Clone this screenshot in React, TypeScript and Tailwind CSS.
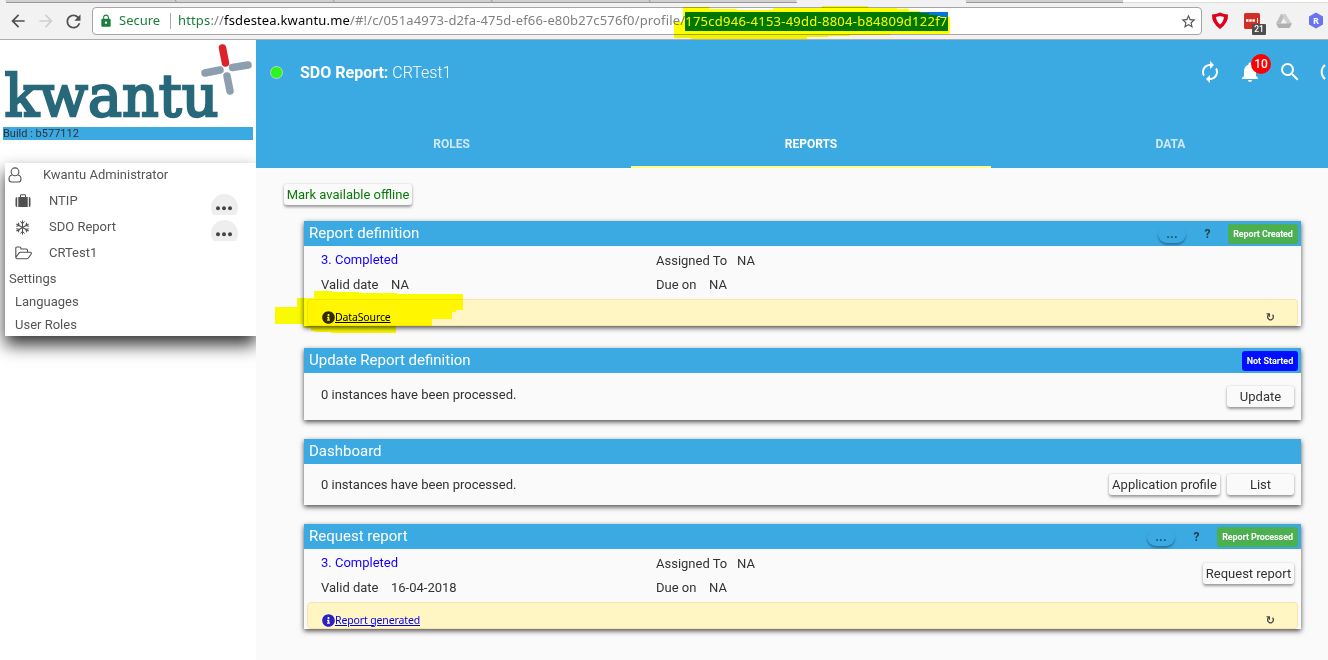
import React from "react";
import { MdAutorenew, MdNotifications, MdSearch, MdStarBorder, MdArrowBack, MdArrowForward, MdRefresh, MdLock } from "react-icons/md";
import { FaInfoCircle } from "react-icons/fa";

function TabStrip() {
  return (
    <svg className="block h-[3px] w-full shrink-0" viewBox="0 0 1328 3">
      <rect width="1328" height="3" fill="#f2f2f2" />
      <path d="M5 0H797L795.500 2.500H6.500Z" fill="#d0d0d0" />
      <path d="M965 0H1123V2.500H967Z" fill="#d0d0d0" />
      <path d="M6 2.500H797M966 2.500H1123M175 0l1.500 2M333 0l1.500 2M491 0l1.500 2M649 0l1.500 2" stroke="#999" fill="none" />
      <path d="M1123 0H1328V2H1124Z" fill="#fff" />
      <path d="M1123 2.500H1328" stroke="#ddd" />
    </svg>
  );
}

function BrowserBar() {
  return (
    <div className="relative flex h-10 flex-col border-b border-[#adadad] bg-[#f2f2f2] font-['Noto_Sans','Open_Sans',sans-serif]">
      <TabStrip />
      <div className="flex h-9 items-center">
        <div className="flex w-[92px] shrink-0 items-center pl-2 text-[#505050]">
          <MdArrowBack size={20} />
          <MdArrowForward size={20} className="ml-2 text-[#cfcfcf]" />
          <MdRefresh size={21} className="ml-[7px]" />
        </div>
        <div className="flex h-7 w-[1110px] shrink-0 items-center rounded-sm border border-[#a6a6a6] bg-white pr-[4px] text-[13px] whitespace-nowrap">
          <MdLock size={14} className="ml-1.5 text-[#188038]" />
          <span className="ml-[6px] w-[43px] text-[#188038]">Secure</span>
          <span className="ml-[8px] h-4 w-px bg-[#aaa]" />
          <span className="ml-[7px] tracking-[0.15px] text-[#808080]">
            <span className="text-[#188038]">https</span>://<span className="text-black">fsdestea.kwantu.me</span>/#!/c/051a4973-d2fa-475d-ef66-e80b27c576f0/profile/
          </span>
          <span className="h-[19px] w-[263px] bg-[#0078d7] leading-[19px] tracking-[0.25px] text-white">175cd946-4153-49dd-8804-b84809d122f7</span>
          <MdStarBorder size={17} className="ml-auto text-[#555]" />
        </div>
        <svg className="ml-[9px] h-5 w-[117px] shrink-0" viewBox="0 0 117 20">
          <path d="M1 3.500Q5 3.500 9 1.500Q13 3.500 17 3.500Q17.500 12 9 18Q0.500 12 1 3.500Z" fill="#e2001a" />
          <path d="M5 6Q9 4.500 13 6Q12.500 10.500 9 13.500Q5.500 10.500 5 6Z" fill="#fff" />
          <rect x="33" y="2" width="16" height="16" rx="1.500" fill="#d32d27" />
          <path d="M35 9.500h9" stroke="#fff" strokeWidth="2.500" strokeDasharray="2.500 .7" />
          <path d="M46.500 7v5" stroke="#fff" />
          <path d="M70 3h5l-5.500 9.500h-4.500Z" fill="#bdbdbd" />
          <path d="M70.500 3h4l6.500 10h-5Z" fill="#cfcfcf" />
          <path d="M65 12.500h16l-2.500 4.500h-11Z" fill="#b0b0b0" />
          <path d="M105 1.500l7 4v8l-7 4-7-4v-8Z" fill="#6b74ef" />
          <text x="105" y="13" textAnchor="middle" fontSize="9" fontWeight="700" fill="#fff">R</text>
        </svg>
      </div>
      <span className="absolute top-6 left-[1252px] flex h-[11px] w-[14px] items-center justify-center rounded-[1px] bg-[#4d4d4d] font-['Roboto',sans-serif] text-[8.500px] font-medium text-white">21</span>
      <svg className="pointer-events-none absolute top-0 left-[670px] z-20 h-[42px] w-[290px] mix-blend-multiply" viewBox="0 0 290 42">
        <path d="M13 7H39V9H67V10H103V8H152V6H198V8H227V9H239V11H250V13H259V15H268V17H280V34H220V35H180V36H158V37H137V39H21V38H4V22H13Z" fill="#ff0" />
      </svg>
    </div>
  );
}

function Logo() {
  return (
    <svg className="block h-[87px] w-64" viewBox="0 0 256 87">
      <text x="4.500" y="75.800" fontFamily="DejaVu Serif" fontSize="58" fill="#27687a" stroke="#27687a" strokeWidth="2.400" textLength="214" lengthAdjust="spacingAndGlyphs">kwantu</text>
      <g strokeWidth="7.500" strokeLinecap="round" fill="none">
        <path d="M222.500 8L225.500 23" stroke="#de2229" />
        <path d="M205 33L220 30M232.500 27.500L248 25M227 36L230 51" stroke="#8d9fae" />
      </g>
    </svg>
  );
}

function UserIcon() {
  return (
    <svg width="14" height="16" viewBox="0 0 14 16" fill="none" stroke="#555" strokeWidth="1.100">
      <circle cx="7" cy="4.800" r="3.900" />
      <path d="M4 8Q1 8.500 1 12Q1 15 3.500 15H10.500Q13 15 13 12Q13 8.500 10 8" />
    </svg>
  );
}

function SuitcaseIcon() {
  return (
    <svg width="16" height="16" viewBox="0 0 16 16" fill="#505050">
      <path d="M2.200 4V14Q0.500 14 0.500 12.500V5.500Q0.500 4 2.200 4ZM13.800 4V14Q15.500 14 15.500 12.500V5.500Q15.500 4 13.800 4Z" />
      <path fillRule="evenodd" d="M3.300 4H5V2.500Q5 1.200 6.200 1.200H9.800Q11 1.200 11 2.500V4H12.700V14H3.300ZM6 4H10V2.200H6Z" />
    </svg>
  );
}

function SnowflakeIcon() {
  return (
    <svg width="15" height="15" viewBox="0 0 15 15" fill="none" stroke="#505050" strokeWidth="1">
      {[0, 60, 120, 180, 240, 300].map((angle) => (
        <path key={angle} transform={`rotate(${angle} 7.5 7.5)`} d="M7.500 7.500V0.400M5.500 1.400L7.500 3.800L9.500 1.400" />
      ))}
    </svg>
  );
}

function FolderIcon() {
  return (
    <svg width="17" height="14" viewBox="0 0 17 14" fill="none" stroke="#505050" strokeWidth="1.100" strokeLinejoin="round">
      <path d="M0.800 11.500V2.200Q0.800 1 2 1H4.700Q5.900 1 5.900 2.200V3H11.300Q12.500 3 12.500 4.200V6M0.800 11.500Q1 12.700 2.200 12.700H12Q12.900 12.600 13.400 12L16 8.200Q17 6.500 15.300 6.300H5.500Q4.500 6.400 3.900 7.200Z" />
    </svg>
  );
}

function Dots() {
  return (
    <span className="mt-[7px] mr-[18px] ml-auto h-[21px] w-[27px] shrink-0 self-start overflow-hidden">
      <svg width="27" height="27" viewBox="0 0 27 27">
        <circle cx="13.500" cy="13.500" r="13.500" fill="#eee" />
        <g fill="#444"><circle cx="7" cy="14.300" r="2" /><circle cx="13" cy="14.300" r="2" /><circle cx="19" cy="14.300" r="2" /></g>
      </svg>
    </span>
  );
}

function NavRow({ icon, label, dots }: { icon: React.ReactNode; label: string; dots?: boolean }) {
  return (
    <div className="flex h-[26px] items-center pl-[10px]">
      <span className="flex w-[34px] pt-[2px]">{icon}</span>
      <span className="pt-px">{label}</span>
      {dots && <Dots />}
    </div>
  );
}

function Sidebar() {
  return (
    <aside className="w-64 shrink-0 overflow-hidden bg-white">
      <Logo />
      <div className="ml-[3px] h-[13px] w-[250px] bg-[#3ba9e2] text-[11px] leading-[13px] text-[#333]">Build : b577112</div>
      <nav className="mt-[23px] ml-[5px] h-[173px] bg-white text-[13px] text-[#555] shadow-[0_9px_16px_rgba(0,0,0,0.8)]">
        <div className="flex h-6 items-center pl-[3px]">
          <UserIcon />
          <span className="ml-[21px]">Kwantu Administrator</span>
        </div>
        <NavRow icon={<SuitcaseIcon />} label="NTIP" dots />
        <NavRow icon={<SnowflakeIcon />} label="SDO Report" dots />
        <NavRow icon={<FolderIcon />} label="CRTest1" />
        <div className="flex h-[25px] items-center pt-[2px] pl-1">Settings</div>
        <div className="flex h-[23px] items-center pl-[10px]">Languages</div>
        <div className="flex h-[23px] items-center pl-[10px]">User Roles</div>
      </nav>
    </aside>
  );
}

function Header() {
  return (
    <header className="flex h-32 flex-col bg-[#3ba9e2] text-white">
      <div className="flex h-16 items-center">
        <span className="ml-[14px] size-[13px] rounded-full border border-[#b8d8c0] bg-[#2bf51d]" />
        <h1 className="ml-[17px] pt-px text-[16px] whitespace-nowrap"><b className="font-bold">SDO Report:</b> <span className="font-light">CRTest1</span></h1>
        <div className="mr-[-14px] ml-auto flex items-center">
          <MdAutorenew size={24} />
          <div className="relative ml-4">
            <MdNotifications size={24} />
            <span className="absolute top-[-6px] left-[13px] flex size-5 items-center justify-center rounded-full bg-[#f00] text-[12px] font-medium">10</span>
          </div>
          <MdSearch size={24} className="ml-4" />
          <svg className="ml-4" width="24" height="24" viewBox="0 0 24 24" fill="none" stroke="#fff" strokeWidth="2"><path d="M7 5A9 9 0 0 0 7 19" /></svg>
        </div>
      </div>
      <div className="flex h-16 overflow-hidden pl-[15px] text-[12px] font-bold">
        <div className="flex w-[360px] shrink-0 items-center justify-center pt-[15px] pl-px text-white/75">ROLES</div>
        <div className="flex w-[360px] shrink-0 items-center justify-center border-b-2 border-[#ffff85] pt-[17px]">REPORTS</div>
        <div className="flex w-[360px] shrink-0 items-center justify-center pt-[15px] pr-px text-white/75">DATA</div>
      </div>
    </header>
  );
}

function Button({ children, className = "" }: { children: React.ReactNode; className?: string }) {
  return <button className={`h-[21px] rounded-[3px] bg-[#fafafa] text-[13px] leading-[21px] whitespace-nowrap shadow-[0_1.5px_3px_rgba(0,0,0,0.4)] ${className}`}>{children}</button>;
}

function Card({ title, badge, badgeClass = "", actions, className, children }: { title: string; badge?: string; badgeClass?: string; actions?: boolean; className: string; children: React.ReactNode }) {
  return (
    <section className={`flex w-[997px] flex-col shadow-[0_2px_5px_rgba(0,0,0,0.7)] ${className}`}>
      <div className="flex h-[25px] shrink-0 items-center bg-[#3ba9e2] pr-[3px] pl-[5px]">
        <h2 className="text-[15px] leading-[23px] text-white">{title}</h2>
        <div className="ml-auto flex items-center">
          {actions && (
            <>
              <span className="flex h-[18px] w-7 items-center justify-center rounded-[9px] text-[13px] font-bold text-[#24506a] shadow-[0_2px_2px_rgba(0,0,0,0.3)]">...</span>
              <span className="ml-[18px] w-[7px] text-center text-[12px] font-bold text-[#263f4e]">?</span>
            </>
          )}
          {badge && <span className={`mt-px ml-[17px] flex h-5 items-center justify-center rounded-[3px] pt-px text-[9px] font-bold whitespace-nowrap text-white ${badgeClass}`}>{badge}</span>}
        </div>
      </div>
      {children}
    </section>
  );
}

function Details({ date, children }: { date: string; children?: React.ReactNode }) {
  return (
    <div className="flex h-[53px] shrink-0 pl-[17px]">
      <div className="w-[335px] shrink-0 pt-px">
        <div className="h-[25px] leading-[25px] text-[#1400ff]">3. Completed</div>
        <div className="flex h-[25px] leading-[25px]"><span className="w-[70px]">Valid date</span><span>{date}</span></div>
      </div>
      <div className="pt-[2px]">
        <div className="flex h-6 leading-[25px]"><span className="w-[81px]">Assigned To</span><span>NA</span></div>
        <div className="flex h-6 leading-[25px]"><span className="w-[53px]">Due on</span><span>NA</span></div>
      </div>
      {children}
    </div>
  );
}

function Notice({ label, iconClass, linkClass }: { label: string; iconClass: string; linkClass: string }) {
  return (
    <div className="mr-[3px] ml-[3px] flex h-[27px] items-center rounded-[4px] border border-[#f8e3b0] bg-[#fff6c4] pt-[10px] pl-[14px]">
      <FaInfoCircle size={13} className={iconClass} />
      <a className={`font-['Noto_Sans',sans-serif] text-[10.500px] tracking-[-0.13px] underline ${linkClass}`}>{label}</a>
      <span className="mt-px mr-[22px] ml-auto font-['DejaVu_Sans',sans-serif] text-[11px] font-bold text-[#444]">↻</span>
    </div>
  );
}

export default function App() {
  return (
    <div className="relative h-[660px] w-[1328px] overflow-hidden bg-[#fafafa] font-['Roboto',sans-serif] text-[#333]">
      <BrowserBar />
      <div className="flex h-[620px]">
        <Sidebar />
        <main className="relative min-w-0 flex-1 bg-[#fafafa] text-[13px]">
          <Header />
          <Button className="mt-4 ml-7 block w-32 text-[#0a7a0a]">Mark available offline</Button>
          <div className="mt-4 ml-12 flex flex-col">
            <Card title="Report definition" badge="Report Created" badgeClass="w-[70px] bg-[#4caf50] tracking-[-0.12px]" actions className="h-[105px]">
              <Details date="NA" />
              <Notice label="DataSource" iconClass="text-[#332b10]" linkClass="text-black" />
            </Card>
            <Card title="Update Report definition" badge="Not Started" badgeClass="w-14 bg-[#0010ff]" className="mt-[22px] h-[72px]">
              <div className="flex justify-between pt-[13px] pr-[7px] pl-[17px]">
                <span className="leading-[18px]">0 instances have been processed.</span>
                <Button className="w-[67px]">Update</Button>
              </div>
            </Card>
            <Card title="Dashboard" className="mt-[19px] h-[66px]">
              <div className="flex pt-[10px] pr-[7px] pl-[17px]">
                <span className="leading-[21px]">0 instances have been processed.</span>
                <Button className="ml-auto w-[111px]">Application profile</Button>
                <Button className="ml-[7px] w-[67px]">List</Button>
              </div>
            </Card>
            <Card title="Request report" badge="Report Processed" badgeClass="w-[81px] bg-[#4caf50] tracking-[-0.1px]" actions className="mt-[19px] h-[105px]">
              <Details date="16-04-2018"><Button className="mt-[14px] mr-[7px] ml-auto w-[91px]">Request report</Button></Details>
              <Notice label="Report generated" iconClass="text-[#2c20c8]" linkClass="text-[#0000ee]" />
            </Card>
          </div>
        </main>
      </div>
      <svg className="pointer-events-none absolute top-[290px] left-[274px] z-20 h-12 w-[200px] mix-blend-multiply" viewBox="0 0 200 48">
        <path d="M40 1H58V2H85V3H123V4H189V20H182V22H178V29H158V36H122V43H57V42H41V41H37V38H29V34H1V17H23V8H40Z" fill="#ff0" />
      </svg>
    </div>
  );
}
